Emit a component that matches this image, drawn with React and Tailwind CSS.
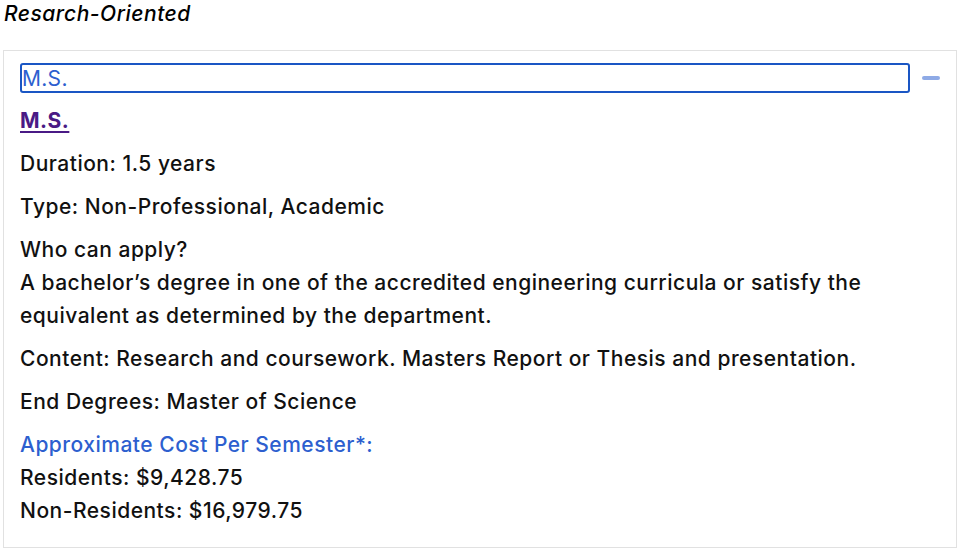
import React from "react";

function MinusIcon() {
  return (
    <svg width="18" height="6" viewBox="0 0 18 6" className="shrink-0">
      <rect x="0" y="1" width="18" height="4" rx="2" fill="#8eaae6" />
    </svg>
  );
}

export default function App() {
  return (
    <div
      className="w-[960px] h-[553px] bg-white text-black overflow-hidden"
      style={{ fontFamily: "Inter, 'Noto Sans', sans-serif" }}
    >
      <h3 className="pl-[4px] pt-[1px] text-[21px] leading-[26px] italic font-medium tracking-[0.5px]">
        Resarch-Oriented
      </h3>
      <div className="mt-[23px] ml-[3px] w-[954px] border border-[#e1e1e1] px-[16px] pt-[12px] pb-[20px]">
        <div className="flex items-center gap-[12px]">
          <div className="flex-1 h-[30px] border-2 border-[#1a56c4] rounded-[3px] flex items-center text-[21px] text-[#2d5fcf] leading-none tracking-[0.3px]">
            M.S.
          </div>
          <MinusIcon />
        </div>
        <div className="text-[21px] leading-[33px] text-[#111] font-medium tracking-[0.5px]">
          <p className="mt-[11px]">
            <a href="#" className="font-bold text-[#4a1a85] underline underline-offset-[3px]">
              M.S.
            </a>
          </p>
          <p className="mt-[10px]">Duration: 1.5 years</p>
          <p className="mt-[10px]">Type: Non-Professional, Academic</p>
          <p className="mt-[10px]">
            Who can apply?
            <br />
            A bachelor’s degree in one of the accredited engineering curricula or satisfy the equivalent as determined by the department.
          </p>
          <p className="mt-[10px]">
            Content: Research and coursework. Masters Report or Thesis and presentation.
          </p>
          <p className="mt-[10px]">End Degrees: Master of Science</p>
          <p className="mt-[10px]">
            <span className="text-[#2d5fcf]">Approximate Cost Per Semester*:</span>
            <br />
            Residents: $9,428.75
            <br />
            Non-Residents: $16,979.75
          </p>
        </div>
      </div>
    </div>
  );
}
